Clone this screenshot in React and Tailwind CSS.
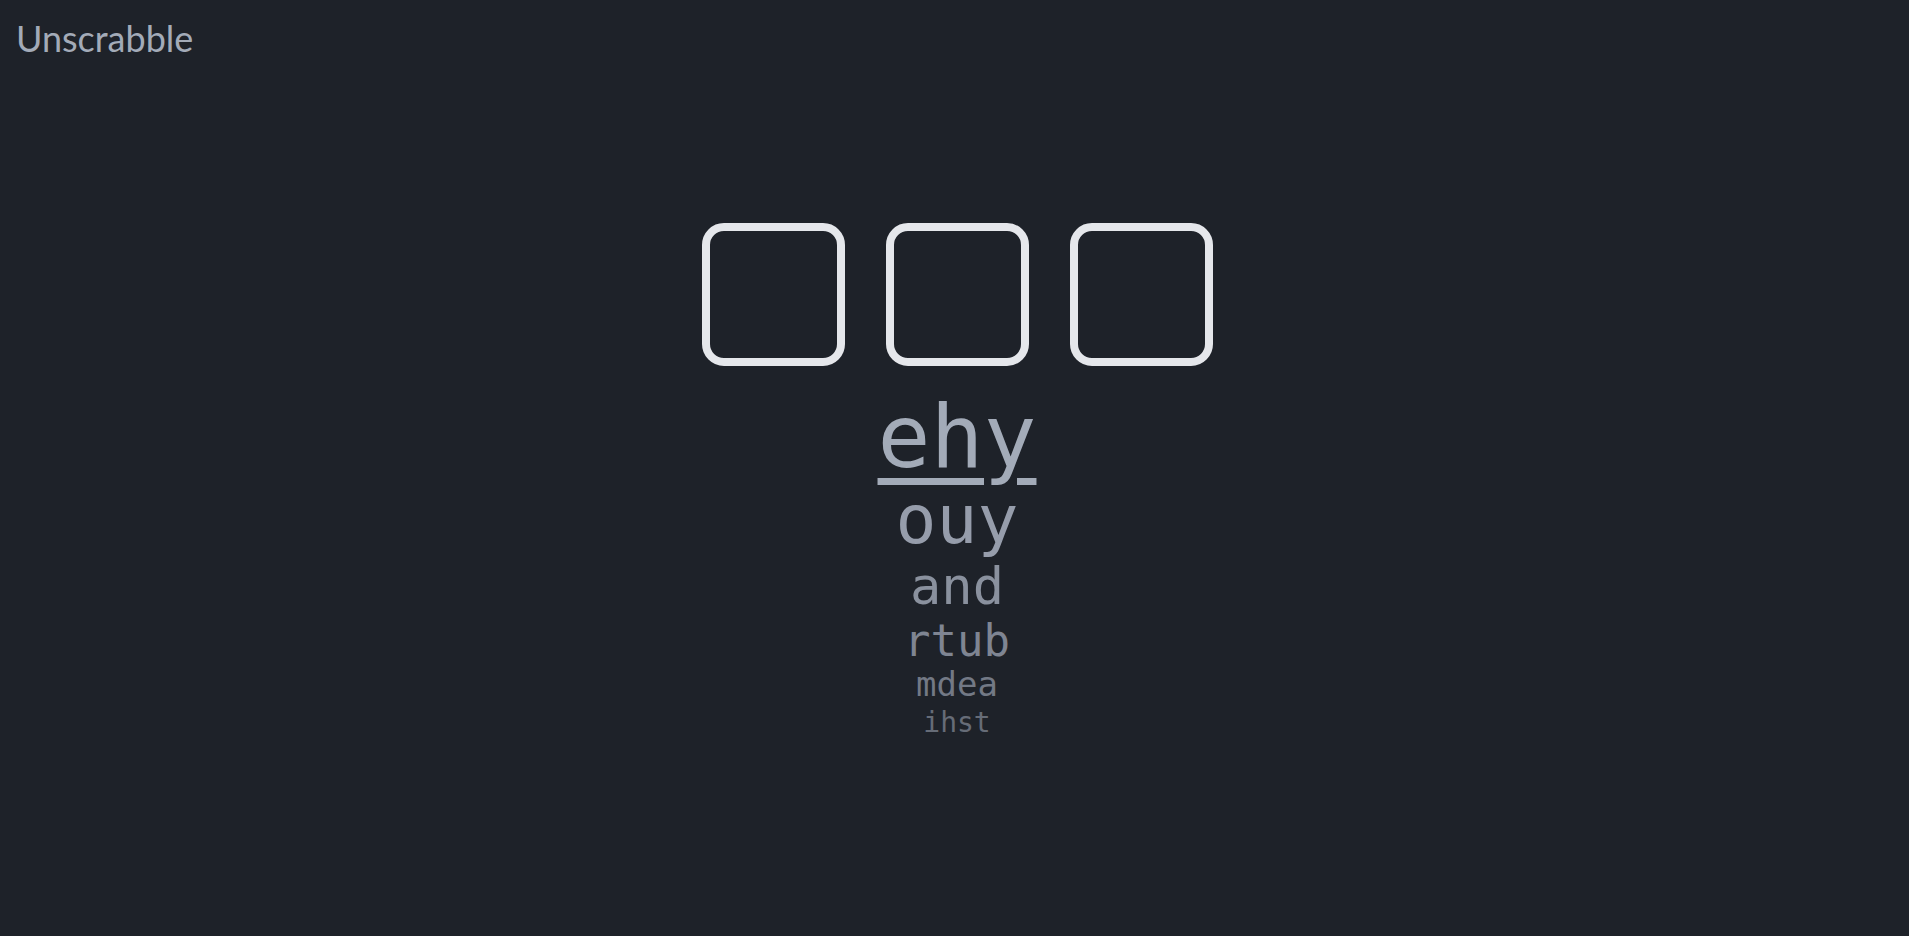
import React from 'react';

const words = [
    { text: 'ehy', cls: 'text-[88px] text-[#a3abb8] underline decoration-[7px] underline-offset-[11px]' },
    { text: 'ouy', cls: 'mt-[5px] text-[68px] text-[#969dab]' },
    { text: 'and', cls: 'mt-[6px] text-[52px] text-[#8a919e]' },
    { text: 'rtub', cls: 'mt-[7px] text-[44px] text-[#7f8592]' },
    { text: 'mdea', cls: 'mt-[4px] text-[34px] text-[#737985]' },
    { text: 'ihst', cls: 'mt-[8px] text-[28px] text-[#666c77]' },
];

const App = () => {
    return (
        <div className="min-h-screen bg-[#1e2229] font-['Lato',sans-serif]">
            {/* Title */}
            <div className="px-4 pt-[17px]">
                <h1 className="text-[36px] leading-[1.2] text-[#a3abb8]">Unscrabble</h1>
            </div>

            {/* Letter slots */}
            <div className="flex justify-center gap-[41px] pl-[5px] mt-[163px]">
                {[0, 1, 2].map((i) => (
                    <div key={i} className="w-[143px] h-[143px] border-8 border-[#e5e7eb] rounded-[22px]" />
                ))}
            </div>

            {/* Suggestions */}
            <div className="flex flex-col items-center mt-[27px] pl-[5px] font-['DejaVu_Sans_Mono',monospace]">
                {words.map((w) => (
                    <div key={w.text} className={`leading-none ${w.cls}`}>
                        {w.text}
                    </div>
                ))}
            </div>
        </div>
    );
};

export default App;
